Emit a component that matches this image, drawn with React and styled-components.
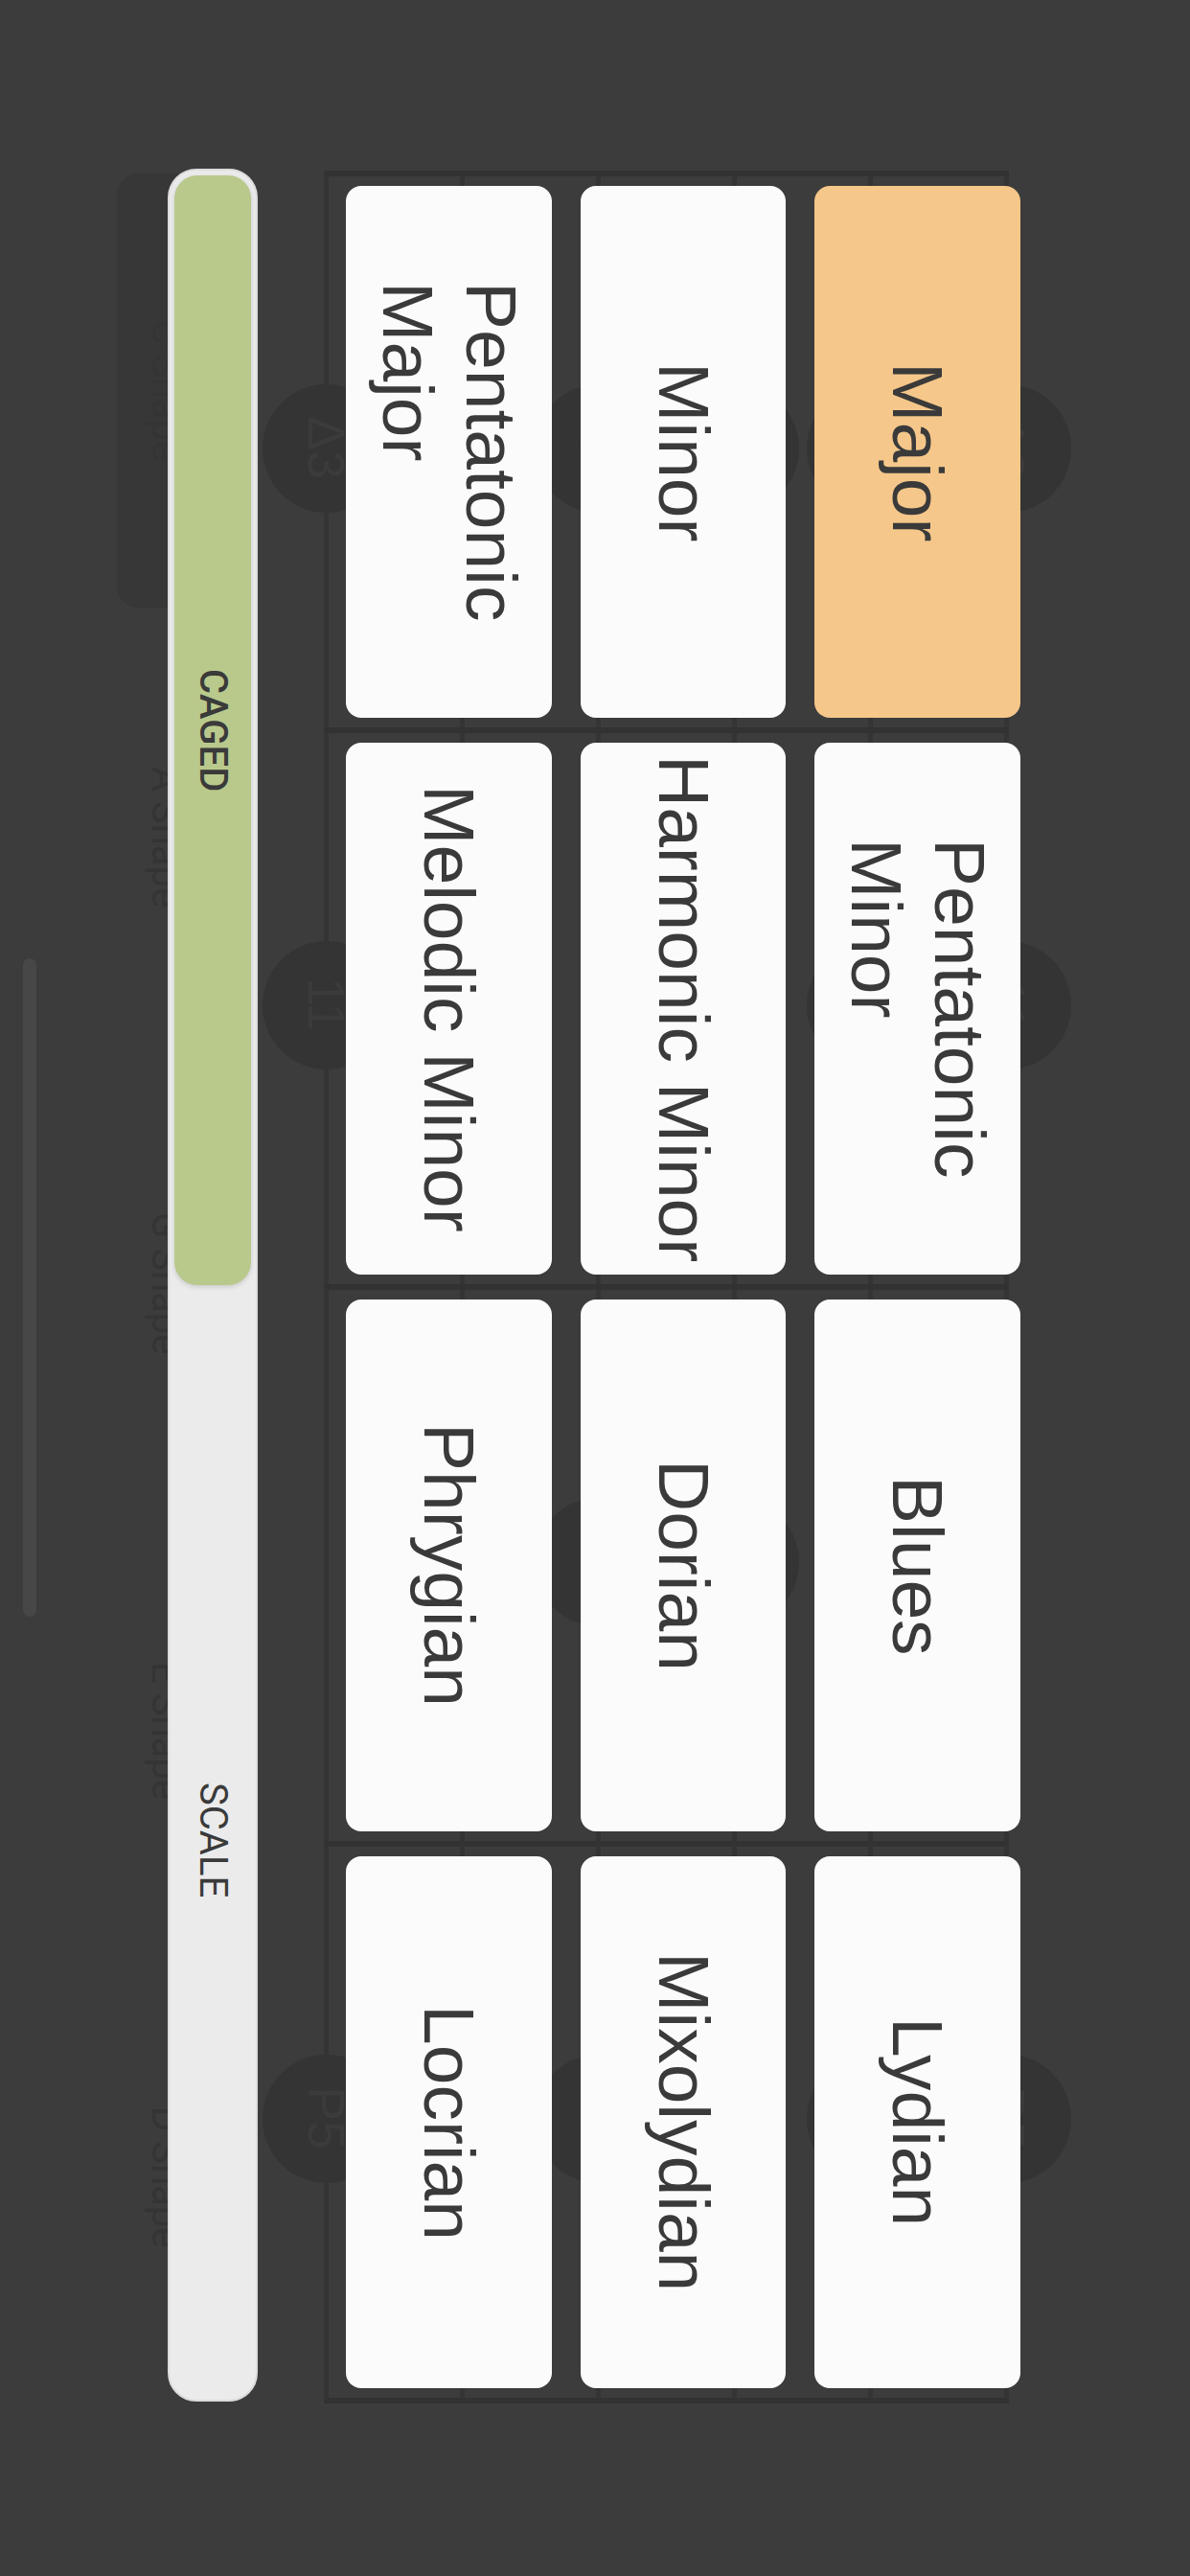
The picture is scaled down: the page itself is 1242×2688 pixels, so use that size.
import React from "react"
import styled, { createGlobalStyle } from "styled-components"

const GlobalStyle = createGlobalStyle`
  html, body {
    margin: 0;
    padding: 0;
    background: #3c3c3c;
  }
  * {
    box-sizing: border-box;
  }
`

const Screen = styled.div`
  position: relative;
  width: 1242px;
  height: 2688px;
  overflow: hidden;
  background: #3c3c3c;
  font-family: "Liberation Sans", Arial, sans-serif;
`

const ScrollThumb = styled.div`
  position: absolute;
  left: 24px;
  top: 1000px;
  width: 14px;
  height: 687px;
  border-radius: 7px;
  background: #474747;
`

/* fretboard underneath the menu */

const Board = styled.div`
  display: flex;
  align-items: flex-start;
  padding: 178px 0 0 122px;
`

const ShapeRail = styled.div`
  display: flex;
  flex-direction: column;
  width: 100px;
  height: 2330px;
`

const ShapeSlot = styled.div`
  flex: 1;
  display: flex;
  align-items: center;
  justify-content: center;
  margin: 3px 0 10px;
  border-radius: 22px;
  background: ${({ active }) => (active ? "#373737" : "transparent")};
`

const ShapeName = styled.span`
  writing-mode: vertical-rl;
  font-family: Roboto, "Liberation Sans", sans-serif;
  font-size: 40px;
  color: #343434;
  white-space: nowrap;
`

const Fretboard = styled.div`
  margin-left: 116px;
  width: 715px;
  border-bottom: 6px solid #323232;
`

const FretRow = styled.div`
  display: flex;
  justify-content: space-between;
  height: 581px;
  border-top: 6px solid #323232;
`

const GuitarString = styled.div`
  width: 5px;
  display: flex;
  align-items: center;
  justify-content: center;
  background: #343434;
`

const Note = styled.div`
  flex-shrink: 0;
  width: 134px;
  height: 134px;
  border-radius: 50%;
  display: flex;
  align-items: center;
  justify-content: center;
  background: #343434;
  margin-top: -8px;
`

const NoteLabel = styled.span`
  writing-mode: vertical-rl;
  font-size: 54px;
  color: #3b3b3b;
  white-space: nowrap;
`

/* scale picker laid over the fretboard */

const Overlay = styled.div`
  position: absolute;
  inset: 0;
  display: flex;
  align-items: flex-start;
  padding: 176px 0 0 175px;
`

const ModeSwitch = styled.div`
  display: flex;
  flex-direction: column;
  width: 94px;
  height: 2330px;
  padding: 5px;
  border: 2px solid #dcdcdc;
  border-radius: 30px;
  background: #ebebeb;
`

const ModeOption = styled.div`
  flex: 1;
  display: flex;
  align-items: center;
  justify-content: center;
  border-radius: 24px;
  background: ${({ active }) => (active ? "#b9c98c" : "transparent")};
  box-shadow: ${({ active }) => (active ? "0 2px 5px rgba(0, 0, 0, 0.14)" : "none")};
`

const ModeLabel = styled.span`
  writing-mode: vertical-rl;
  font-family: Roboto, "Liberation Sans", sans-serif;
  font-size: 40px;
  font-weight: ${({ active }) => (active ? 500 : 400)};
  color: #3a3a3a;
`

const ScaleGrid = styled.div`
  display: grid;
  grid-template-columns: 215px 214px 215px;
  grid-template-rows: repeat(4, 555px);
  column-gap: 30px;
  row-gap: 26px;
  margin: 18px 0 0 92px;
`

const ScaleCard = styled.div`
  writing-mode: vertical-rl;
  display: flex;
  align-items: center;
  justify-content: center;
  padding: 10px 0;
  border-radius: 16px;
  background: ${({ selected }) => (selected ? "#f5c78a" : "#fbfbfb")};
  color: #3a3a3a;
  font-size: 75px;
  line-height: 1.16;
  text-align: start;
  white-space: pre-line;
`

const shapes = ["C Shape", "A Shape", "G Shape", "E Shape", "D Shape"]

// notes per fret, indexed by string (0 = top string)
const frets = [
  { 0: "Δ3", 2: "6", 3: "2", 4: "5", 5: "Δ3" },
  { 0: "11", 4: "6", 5: "11" },
  { 2: "Δ7", 3: "3" },
  { 0: "P5", 2: "R", 4: "Δ7", 5: "P5" },
]

// columns read right to left, like the board; long names break by hand
const scales = [
  ["Pentatonic\nMajor", "Minor", "Major"],
  ["Melodic Minor", "Harmonic Minor", "Pentatonic\nMinor"],
  ["Phrygian", "Dorian", "Blues"],
  ["Locrian", "Mixolydian", "Lydian"],
]

export default function App() {
  return (
    <Screen>
      <GlobalStyle />
      <ScrollThumb />

      <Board>
        <ShapeRail>
          {shapes.map((name, i) => (
            <ShapeSlot key={name} active={i === 0}>
              <ShapeName>{name}</ShapeName>
            </ShapeSlot>
          ))}
        </ShapeRail>

        <Fretboard>
          {frets.map((notes, f) => (
            <FretRow key={f}>
              {[0, 1, 2, 3, 4, 5].map(s => (
                <GuitarString key={s}>
                  {notes[s] && (
                    <Note>
                      <NoteLabel>{notes[s]}</NoteLabel>
                    </Note>
                  )}
                </GuitarString>
              ))}
            </FretRow>
          ))}
        </Fretboard>
      </Board>

      <Overlay>
        <ModeSwitch>
          <ModeOption active>
            <ModeLabel active>CAGED</ModeLabel>
          </ModeOption>
          <ModeOption>
            <ModeLabel>SCALE</ModeLabel>
          </ModeOption>
        </ModeSwitch>

        <ScaleGrid>
          {scales.flat().map(name => (
            <ScaleCard key={name} selected={name === "Major"}>
              {name}
            </ScaleCard>
          ))}
        </ScaleGrid>
      </Overlay>
    </Screen>
  )
}
